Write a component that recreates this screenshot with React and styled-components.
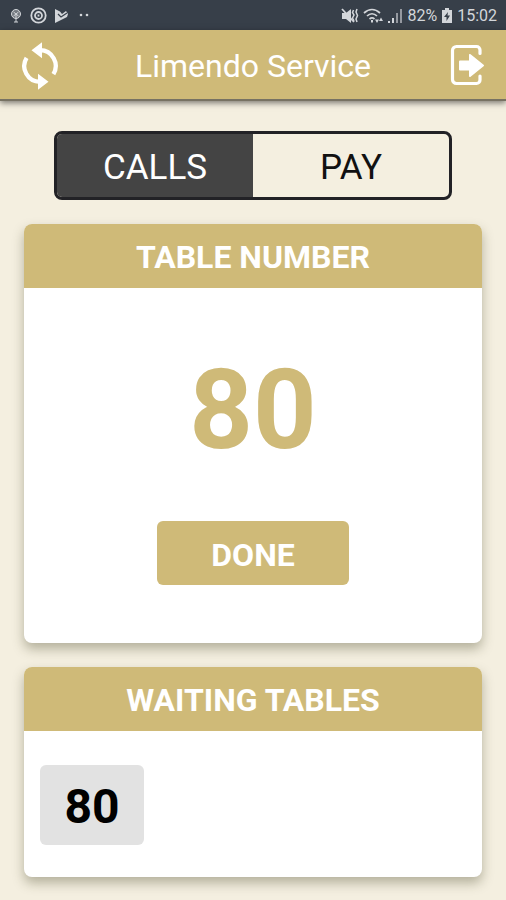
import React, { useState } from 'react';
import styled, { createGlobalStyle } from 'styled-components';

const GlobalStyle = createGlobalStyle`
    *, *::before, *::after {
        box-sizing: border-box;
    }

    body {
        margin: 0;
        background-color: #F4EFE0;
        font-family: Roboto, "Liberation Sans", sans-serif;
    }

    button {
        font-family: inherit;
        cursor: pointer;
    }
`;

const Screen = styled.div`
    display: flex;
    flex-direction: column;
    min-height: 100vh;
`;

const StatusBar = styled.div`
    display: flex;
    align-items: center;
    justify-content: space-between;
    height: 30px;
    padding: 2px 9px 0 8px;
    background-color: #373F49;
    color: #D3D6DA;
    font-size: 16px;
    line-height: 20px;
`;

const StatusGroup = styled.div`
    display: flex;
    align-items: center;
    gap: ${({ $gap }) => $gap};

    svg {
        display: block;
    }
`;

const Header = styled.header`
    display: flex;
    align-items: center;
    justify-content: space-between;
    height: 71px;
    padding: 2px 16px 0;
    background-color: #CFBA78;
    border-bottom: 2px solid #777263;
    box-shadow: 0 2px 6px rgba(0, 0, 0, 0.5);
`;

const Title = styled.h1`
    margin: 0;
    color: white;
    font-size: 32px;
    font-weight: 400;
    line-height: 40px;
`;

const IconButton = styled.button`
    display: flex;
    align-items: center;
    justify-content: center;
    width: 48px;
    height: 48px;
    padding: 0;
    border: none;
    background: none;
    color: white;
`;

const Content = styled.main`
    display: flex;
    flex-direction: column;
    gap: 24px;
    padding: 30px 24px 16px;
`;

const Tabs = styled.div`
    display: grid;
    grid-template-columns: 1fr 1fr;
    height: 69px;
    margin: 0 30px;
    border: 3px solid #222226;
    border-radius: 8px;
    overflow: hidden;
`;

const Tab = styled.button`
    padding: 4px 0 0;
    border: none;
    background-color: ${({ $active }) => ($active ? '#444444' : 'transparent')};
    color: ${({ $active }) => ($active ? 'white' : '#111111')};
    font-size: 35px;
    line-height: 40px;
`;

const Card = styled.section`
    border-radius: 8px;
    background-color: white;
    box-shadow: 0 6px 12px rgba(60, 60, 30, 0.35);
    overflow: hidden;
`;

const CardTitle = styled.h2`
    margin: 0;
    padding: 13px 16px 11px;
    background-color: #CFBA78;
    color: white;
    font-size: 32px;
    font-weight: 700;
    line-height: 40px;
    text-align: center;
`;

const CurrentTable = styled.div`
    display: flex;
    flex-direction: column;
    align-items: center;
    gap: 51px;
    padding: 62px 16px 58px;
`;

const BigNumber = styled.div`
    color: #CFBA78;
    font-size: 111px;
    font-weight: 700;
    line-height: 120px;
`;

const DoneButton = styled.button`
    width: 192px;
    height: 64px;
    padding: 3px 0 0;
    border: none;
    border-radius: 6px;
    background-color: #CFBA78;
    color: white;
    font-size: 32px;
    font-weight: 700;
    line-height: 40px;
`;

const WaitingList = styled.div`
    display: flex;
    flex-wrap: wrap;
    gap: 16px;
    padding: 34px 16px 32px;
`;

const WaitingTable = styled.button`
    width: 104px;
    height: 80px;
    padding: 4px 0 0;
    border: none;
    border-radius: 6px;
    background-color: #E2E2E2;
    color: black;
    font-size: 48px;
    font-weight: 700;
    line-height: 56px;
`;

const SyncIcon = () => (
    <svg width="48" height="48" viewBox="0 0 48 48" aria-hidden="true">
        <path d="M24 8.200A15.800 15.800 0 0 1 37.400 32.200M24 39.800A15.800 15.800 0 0 1 10.600 15.800" fill="none" stroke="currentColor" strokeWidth="4.300" />
        <path d="M15.500 8.200L26 .200v16zM32.500 39.800L22 31.800v16z" fill="currentColor" />
    </svg>
);

const ExitIcon = () => (
    <svg width="48" height="48" viewBox="0 0 48 48" aria-hidden="true">
        <path d="M38 11.500V8a3.500 3.500 0 0 0-3.500-3.500h-20A4 4 0 0 0 10.500 8.500v29a4 4 0 0 0 4 4h20A3.500 3.500 0 0 0 38 38v-4" fill="none" stroke="currentColor" strokeWidth="3.200" strokeLinecap="round" />
        <path d="M18 18.500h9v-5.500a1 1 0 0 1 1.600-.8l13 10.500a1 1 0 0 1 0 1.600l-13 10.500a1 1 0 0 1-1.600-.8v-5.500h-9a1 1 0 0 1-1-1v-8a1 1 0 0 1 1-1z" fill="currentColor" />
    </svg>
);

const BulbIcon = () => (
    <svg width="16" height="18" viewBox="0 0 16 18" fill="none" stroke="currentColor" aria-hidden="true">
        <circle cx="8" cy="7" r="4.500" fill="currentColor" fillOpacity="0.4" />
        <path d="M5.500 5l5 4M10.500 5l-5 4M8 7v8M6 15h4" />
    </svg>
);

const TargetIcon = () => (
    <svg width="18" height="18" viewBox="0 0 18 18" fill="none" stroke="currentColor" strokeWidth="1.800" aria-hidden="true">
        <circle cx="8.500" cy="8.500" r="7.200" />
        <circle cx="8.500" cy="8.500" r="3.500" />
        <path d="M8.500 7.500v2" />
    </svg>
);

const PlayIcon = () => (
    <svg width="16" height="18" viewBox="0 0 16 18" aria-hidden="true">
        <path d="M1 2l5 2.500 2 2.500 4-3 2 3-1 3-12 6z" fill="currentColor" />
        <path d="M4 7l3 3 6-4" fill="none" stroke="#373F49" strokeWidth="1.200" />
    </svg>
);

const DotsIcon = () => (
    <svg width="16" height="18" viewBox="0 0 16 18" fill="currentColor" aria-hidden="true">
        <circle cx="5" cy="8" r="1.300" />
        <circle cx="11" cy="8" r="1.300" />
    </svg>
);

const MuteIcon = () => (
    <svg width="18" height="18" viewBox="0 0 18 18" aria-hidden="true">
        <path d="M1 6h4l5-4v14l-5-4H1z" fill="currentColor" />
        <path d="M1 2l12 13" stroke="currentColor" strokeWidth="1.800" />
        <path d="M12.500 3l-1 2.500 1.500 2.500-1.500 3 1.500 3M16 2l-1 3 1.500 3.500L15 12l1 3" fill="none" stroke="currentColor" strokeWidth="1.500" />
    </svg>
);

const WifiIcon = () => (
    <svg width="20" height="18" viewBox="0 0 20 18" fill="none" stroke="currentColor" strokeWidth="1.700" aria-hidden="true">
        <path d="M1 6c5-4.500 11-4.500 16 0M4 9c3-3 7-3 10 0M6.500 12c2-1.700 3-1.700 5 0" />
        <path d="M9 13v2.500" strokeWidth="2" />
        <path d="M12 12.500h4l-2 3.500zM16 14l2-3.500 2 3.500z" fill="currentColor" stroke="none" />
    </svg>
);

const SignalIcon = () => (
    <svg width="16" height="18" viewBox="0 0 16 18" fill="currentColor" aria-hidden="true">
        <path d="M1 14h2v2H1zM5 11h2v5H5z" />
        <path d="M9 6h2v10H9zM13 2h2v14h-2z" fillOpacity="0.6" />
    </svg>
);

const BatteryIcon = () => (
    <svg width="12" height="18" viewBox="0 0 12 18" aria-hidden="true">
        <path d="M4 1h4v2h3v13H1V3h3z" fill="currentColor" />
        <path d="M7 5L3 10h2.500v4L9 8.500H6.500z" fill="#373F49" />
    </svg>
);

const waitingTables = [80];

const App = () => {
    const [tab, setTab] = useState('calls');

    return (
        <Screen>
            <GlobalStyle />
            <StatusBar>
                <StatusGroup $gap="6px">
                    <BulbIcon />
                    <TargetIcon />
                    <PlayIcon />
                    <DotsIcon />
                </StatusGroup>
                <StatusGroup $gap="4px">
                    <MuteIcon />
                    <WifiIcon />
                    <SignalIcon />
                    <span>82%</span>
                    <BatteryIcon />
                    <span>15:02</span>
                </StatusGroup>
            </StatusBar>
            <Header>
                <IconButton type="button" aria-label="Refresh">
                    <SyncIcon />
                </IconButton>
                <Title>Limendo Service</Title>
                <IconButton type="button" aria-label="Log out">
                    <ExitIcon />
                </IconButton>
            </Header>
            <Content>
                <Tabs>
                    <Tab type="button" $active={tab === 'calls'} onClick={() => setTab('calls')}>CALLS</Tab>
                    <Tab type="button" $active={tab === 'pay'} onClick={() => setTab('pay')}>PAY</Tab>
                </Tabs>
                <Card>
                    <CardTitle>TABLE NUMBER</CardTitle>
                    <CurrentTable>
                        <BigNumber>{waitingTables[0]}</BigNumber>
                        <DoneButton type="button">DONE</DoneButton>
                    </CurrentTable>
                </Card>
                <Card>
                    <CardTitle>WAITING TABLES</CardTitle>
                    <WaitingList>
                        {waitingTables.map((number) => (
                            <WaitingTable type="button" key={number}>{number}</WaitingTable>
                        ))}
                    </WaitingList>
                </Card>
            </Content>
        </Screen>
    );
};

export default App;
